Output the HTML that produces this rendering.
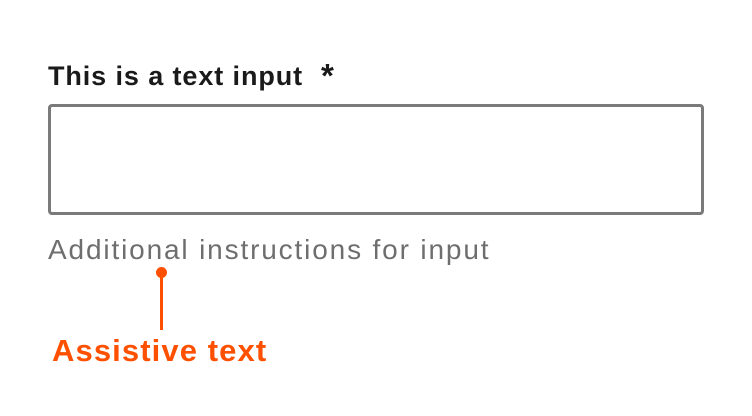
<!DOCTYPE html>
<html><head><style>
html,body{margin:0;padding:0;background:#fff;width:752px;height:416px;overflow:hidden;position:relative;font-family:"Liberation Sans",sans-serif}
.label{position:absolute;left:48px;top:61px;font-size:27px;font-weight:bold;color:#1a1a1a;white-space:nowrap;letter-spacing:0.9px;line-height:normal}
.star{position:absolute;left:321px;top:57px;font-size:33px;font-weight:bold;color:#1a1a1a}
.box{position:absolute;left:48px;top:104px;width:650px;height:105px;border:3px solid #7a7a7a;border-radius:4px}
.help{position:absolute;left:48px;top:234px;font-size:28px;color:#6e6e6e;white-space:nowrap;letter-spacing:1.85px}
.dot{position:absolute;left:156px;top:267px;width:11px;height:11px;border-radius:50%;background:#ff5000}
.line{position:absolute;left:160px;top:272px;width:3px;height:58px;background:#ff5000}
.assist{position:absolute;left:52px;top:333px;font-size:31px;font-weight:bold;color:#ff5000;white-space:nowrap;letter-spacing:1.1px}
</style></head><body>
<div class="label">This is a text input</div>
<div class="star">*</div>
<div class="box"></div>
<div class="help">Additional instructions for input</div>
<div class="dot"></div>
<div class="line"></div>
<div class="assist">Assistive text</div>
</body></html>
